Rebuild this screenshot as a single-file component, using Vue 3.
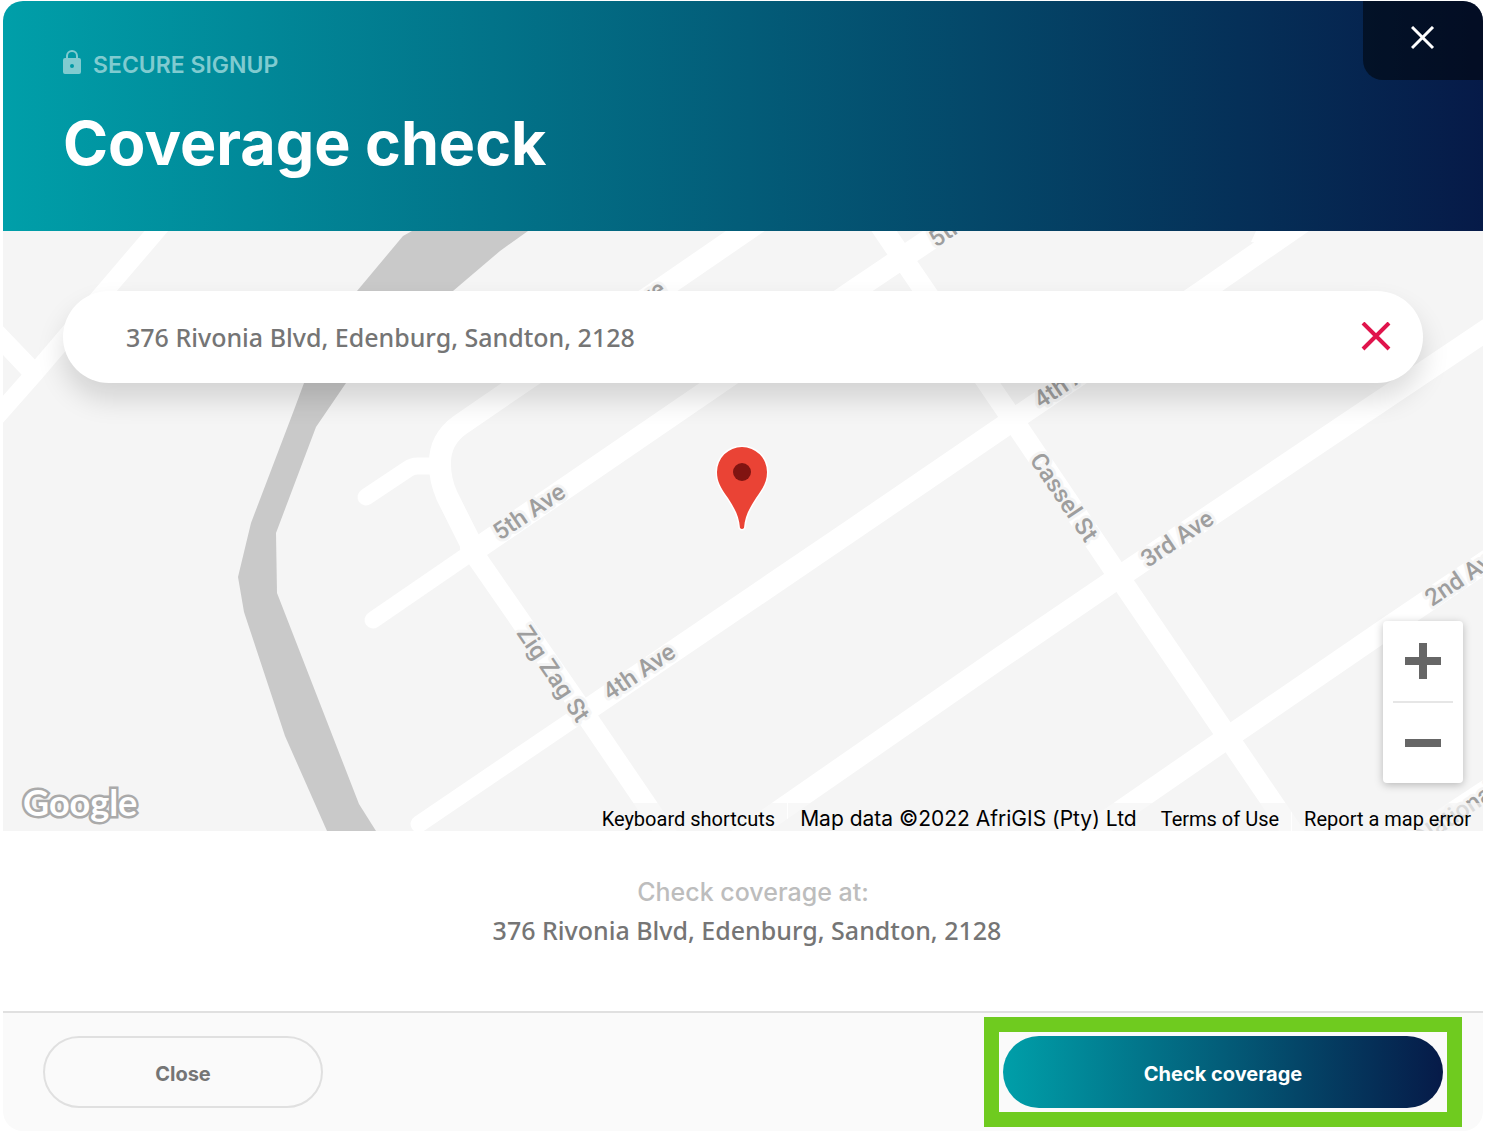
<script setup>
import { ref } from 'vue'

const address = ref('376 Rivonia Blvd, Edenburg, Sandton, 2128')

const roads = [
  { d: 'M170 215L105 291L35 373L-10 424', w: 18 },
  { d: 'M-10 327L32 371', w: 20 },
  { d: 'M770 214L658 291L521 383L460 425Q439 440 440 465Q440 480 447 496L475 552', w: 22 },
  { d: 'M470 548L587 717L670 839', w: 20 },
  { d: 'M366 497L408 469Q412 466 418 466L440 466', w: 17 },
  { d: 'M373 620L475 550', w: 17 },
  { d: 'M475 550L719 383L853 291L990 199', w: 22 },
  { d: 'M870 210L884 231L1013 420L1119 577L1300 843', w: 21 },
  { d: 'M419 824L587 710', w: 17 },
  { d: 'M587 710L852 530L1013 420L1203 291L1320 210', w: 22 },
  { d: 'M736 841L791 803L1000 658L1119 577L1500 321', w: 22 },
  { d: 'M1085 836L1227 738L1383 631L1500 552', w: 22 },
  { d: 'M1400 848L1500 782', w: 22 },
]

const labels = [
  { text: '6th Ave', x: 600, y: 338, turn: -34 },
  { text: '5th Ave', x: 936, y: 248, turn: -34 },
  { text: '4th Ave', x: 1041, y: 409, turn: -34 },
  { text: '5th Ave', x: 500, y: 541, turn: -34 },
  { text: '4th Ave', x: 610, y: 701, turn: -34 },
  { text: '3rd Ave', x: 1148, y: 568, turn: -34 },
  { text: '2nd Ave', x: 1432, y: 607, turn: -34 },
  { text: 'National', x: 1424, y: 845, turn: -34 },
  { text: 'Cassel St', x: 1029, y: 460, turn: 56 },
  { text: 'Zig Zag St', x: 516, y: 633, turn: 56 },
]
</script>

<template>
  <main class="dialog">
    <header class="top">
      <div class="heading">
        <p class="secure">
          <svg class="lock" viewBox="0 0 18 24" aria-hidden="true">
            <path d="M4 10V6a5 5 0 0 1 10 0v4" fill="none" stroke="currentColor" stroke-width="2" />
            <path fill="currentColor" fill-rule="evenodd" d="M2 8h14a2 2 0 0 1 2 2v12a2 2 0 0 1-2 2H2a2 2 0 0 1-2-2V10a2 2 0 0 1 2-2zm7 6a2 2 0 1 0 0 4a2 2 0 0 0 0-4z" />
          </svg>
          <span>SECURE SIGNUP</span>
        </p>
        <h1>Coverage check</h1>
      </div>
      <button class="dismiss" type="button" aria-label="Close dialog">
        <svg width="24" height="24" viewBox="0 0 24 24" aria-hidden="true">
          <path d="M1 1L22 22M22 1L1 22" fill="none" stroke="#fff" stroke-width="3" />
        </svg>
      </button>
    </header>

    <section class="map" aria-label="Map">
      <svg class="canvas" viewBox="3 231 1480 600" preserveAspectRatio="xMidYMid slice">
        <path
          fill="#c9c9c9"
          d="M412 231L403 236L357 291L304 383L294 410L251 523L238 577L244 612L285 736L327 831H376L359 804L277 593L276 533L316 427L346 383L453 291L500 251L528 231Z"
        />
        <path fill="#fff" d="M1256 231L1251 242L1275 245L1290 231Z" />
        <path v-for="(r, i) in roads" :key="i" class="road" :d="r.d" :stroke-width="r.w" />
        <text
          v-for="(l, i) in labels"
          :key="'l' + i"
          class="street"
          :transform="`translate(${l.x} ${l.y}) rotate(${l.turn})`"
        >{{ l.text }}</text>
        <path
          fill="#ea4335"
          stroke="#fff"
          stroke-width="3"
          paint-order="stroke"
          d="M742 447a25 25 0 0 1 25 25c0 10-4 16-11 26c-7 11-11 18-12 30q-2 2-4 0c-1-12-5-19-12-30c-7-10-11-16-11-26a25 25 0 0 1 25-25z"
        />
        <circle cx="742" cy="472" r="9" fill="#811411" />
      </svg>

      <div class="search">
        <input v-model="address" type="text" aria-label="Address" />
        <button type="button" class="clear" aria-label="Clear address" @click="address = ''">
          <svg width="30" height="30" viewBox="0 0 30 30" aria-hidden="true">
            <path d="M2 1L28 27M28 1L2 27" fill="none" stroke="#e0144c" stroke-width="4" />
          </svg>
        </button>
      </div>

      <div class="zoom">
        <button type="button" aria-label="Zoom in">
          <svg width="36" height="36" viewBox="0 0 36 36" aria-hidden="true"><path fill="#666" d="M14 0h8v14h14v8H22v14h-8V22H0v-8h14z" /></svg>
        </button>
        <button type="button" aria-label="Zoom out">
          <svg width="36" height="36" viewBox="0 0 36 36" aria-hidden="true"><path fill="#666" d="M0 14h36v8H0z" /></svg>
        </button>
      </div>

      <div class="credits">
        <svg class="brand" width="130" height="48" viewBox="0 0 130 48"><text x="5" y="33">Google</text></svg>
        <button type="button">Keyboard shortcuts</button>
        <div class="legal">
          <span class="data">Map data ©2022 AfriGIS (Pty) Ltd</span>
          <a href="#terms">Terms of Use</a>
        </div>
        <a href="#report">Report a map error</a>
      </div>
    </section>

    <section class="summary">
      <p class="caption">Check coverage at:</p>
      <p class="place">{{ address }}</p>
    </section>

    <footer class="actions">
      <button type="button" class="pill close">Close</button>
      <div class="highlight">
        <button type="button" class="pill check">Check coverage</button>
      </div>
    </footer>
  </main>
</template>

<style>
body {
  background: #fff;
}
</style>

<style scoped>
.dialog {
  margin: 1px 2px 0 3px;
  border-radius: 20px;
  overflow: hidden;
  font-family: Inter, 'Liberation Sans', sans-serif;
  color: #757575;
}
p,
h1 {
  margin: 0;
}
button {
  font: inherit;
  color: inherit;
  padding: 0;
  border: 0;
  background: none;
  cursor: pointer;
}
svg {
  display: block;
}
.top {
  display: flex;
  justify-content: space-between;
  align-items: flex-start;
  min-height: 230px;
  background: linear-gradient(90deg, #009fa9, #061a48);
}
.heading {
  padding: 48px 60px 0;
}
.secure {
  display: flex;
  align-items: center;
  gap: 12px;
  height: 32px;
  font-size: 23px;
  line-height: 32px;
  font-weight: 600;
  color: #80cbd0;
}
.lock {
  width: 18px;
  height: 24px;
  margin-bottom: 6px;
}
h1 {
  margin-top: 22px;
  font-size: 61px;
  line-height: 80px;
  font-weight: 700;
  color: #fff;
}
.dismiss {
  display: grid;
  place-items: center;
  width: 120px;
  height: 79px;
  padding-bottom: 6px;
  border-bottom-left-radius: 20px;
  background: rgba(0, 0, 0, 0.5);
}
.map {
  position: relative;
  display: flex;
  flex-direction: column;
  min-height: 600px;
  background: #f5f5f5;
}
.canvas {
  position: absolute;
  inset: 0;
  width: 100%;
  height: 100%;
}
.road {
  fill: none;
  stroke: #fff;
  stroke-linecap: round;
  stroke-linejoin: round;
}
.street {
  font: 500 24px Roboto, sans-serif;
  fill: #9e9e9e;
  stroke: #f5f5f5;
  stroke-width: 6px;
  stroke-linejoin: round;
  paint-order: stroke;
}
.search {
  position: relative;
  display: flex;
  align-items: center;
  height: 92px;
  margin: 60px 60px 0;
  padding: 0 32px 0 63px;
  box-sizing: border-box;
  border-radius: 46px;
  background: #fff;
  box-shadow: 0 16px 28px rgba(0, 0, 0, 0.14);
}
.search input {
  flex: 1;
  min-width: 0;
  padding: 0;
  border: 0;
  outline: 0;
  background: none;
  color: #757575;
  font: 500 25px 'Noto Sans', sans-serif;
}
.zoom {
  position: relative;
  align-self: flex-end;
  display: flex;
  flex-direction: column;
  margin: auto 20px 20px 0;
  border-radius: 4px;
  background: #fff;
  box-shadow: 0 2px 8px rgba(0, 0, 0, 0.25);
}
.zoom button {
  display: grid;
  place-items: center;
  width: 80px;
  height: 80px;
}
.zoom button + button::before {
  content: '';
  width: 60px;
  height: 2px;
  background: #e6e6e6;
}
.zoom button + button {
  height: 82px;
  grid-template-rows: 2px 1fr;
}
.credits {
  position: relative;
  display: flex;
  justify-content: flex-end;
  align-items: flex-end;
  gap: 1px;
  height: 28px;
  font: 20px/28px Roboto, sans-serif;
  color: #000;
}
.credits button,
.credits a,
.data {
  height: 28px;
  padding: 2px 12px 0;
  box-sizing: border-box;
  color: #000;
  text-decoration: none;
  white-space: nowrap;
}
.credits > button,
.credits > a,
.legal {
  background: rgba(245, 245, 245, 0.7);
}
.legal {
  display: flex;
}
.data {
  font-family: Inter, sans-serif;
  font-size: 21px;
}
.brand {
  margin: 0 auto 0 15px;
}
.brand text {
  font: 700 36px Lato, sans-serif;
  fill: #fff;
  stroke: #aaa;
  stroke-width: 5px;
  paint-order: stroke;
}
.summary {
  padding: 43px 40px 61px 48px;
  text-align: center;
}
.caption {
  padding-left: 12px;
  font-size: 25px;
  line-height: 36px;
  font-weight: 500;
  color: #bdbdbd;
}
.place {
  font: 500 25px/40px 'Noto Sans', sans-serif;
}
.actions {
  display: flex;
  justify-content: space-between;
  align-items: center;
  padding: 23px 40px;
  border-top: 2px solid #e0e0e0;
  background: #fafafa;
}
.pill {
  display: block;
  height: 72px;
  padding-top: 4px;
  border-radius: 36px;
  font-size: 20px;
  font-weight: 700;
}
.close {
  width: 280px;
  border: 2px solid #e0e0e0;
}
.check {
  width: 440px;
  color: #fff;
  background: linear-gradient(90deg, #009fa9, #061a48);
}
.highlight {
  outline: 15px solid #6fcb1f;
  outline-offset: 4px;
}
</style>
